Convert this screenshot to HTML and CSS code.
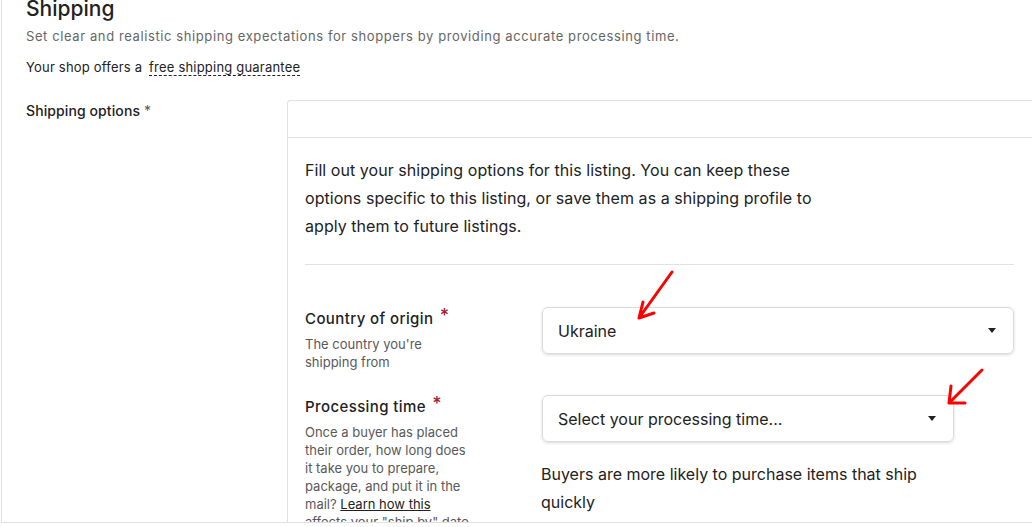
FILE: index.html
```html
<!DOCTYPE html>
<html lang="en">
<head>
    <meta charset="UTF-8">
    <title>Shipping</title>
    <meta name="viewport" content="width=device-width, initial-scale=1.0">
    <link rel="stylesheet" href="styles.css">
</head>
<body>
    <div class="page">
        <!-- Section heading -->
        <div class="section-head">
            <h1>Shipping</h1>
            <p class="sub">Set clear and realistic shipping expectations for shoppers by providing accurate processing time.</p>
            <p class="guarantee">Your shop offers a <span class="dashed">free shipping guarantee</span></p>
        </div>

        <div class="row">
            <div class="row-label">Shipping options <span class="req-small">*</span></div>

            <div class="panel">
                <div class="panel-top"></div>
                <div class="panel-body">
                    <p class="intro">Fill out your shipping options for this listing. You can keep these options specific to this listing, or save them as a shipping profile to apply them to future listings.</p>
                    <hr class="divider">

                    <div class="field">
                        <div class="field-label">
                            <div class="field-title">Country of origin <span class="req">*</span></div>
                            <div class="field-desc">The country you're shipping from</div>
                        </div>
                        <div class="field-control">
                            <div class="select">
                                <span>Ukraine</span>
                                <span class="caret"></span>
                            </div>
                        </div>
                    </div>

                    <div class="field">
                        <div class="field-label">
                            <div class="field-title">Processing time <span class="req">*</span></div>
                            <div class="field-desc">Once a buyer has placed their order, how long does it take you to prepare, package, and put it in the mail? <a href="#">Learn how this</a> affects your "ship by" date</div>
                        </div>
                        <div class="field-control narrow">
                            <div class="select">
                                <span>Select your processing time...</span>
                                <span class="caret"></span>
                            </div>
                            <p class="note">Buyers are more likely to purchase items that ship quickly</p>
                        </div>
                    </div>
                </div>
            </div>
        </div>

        <!-- hand-drawn annotation arrows -->
        <svg class="marks" width="1032" height="527" viewBox="0 0 1032 527">
            <g fill="none" stroke="#ff0000" stroke-width="3" stroke-linecap="round" stroke-linejoin="round">
                <path d="M672 272 L639 318 M643 302 L639 318 L654 313"/>
                <path d="M982 370 L949 403 M951 386 L949 403 L965 403"/>
            </g>
        </svg>
    </div>
</body>
</html>
```

FILE: styles.css
```css
body {
    margin: 0;
    font-family: Inter, 'Noto Sans', Arial, sans-serif;
    color: #222222;
    background: #fff;
    overflow: hidden;
}
.page {
    position: relative;
    margin-left: 1px;
    height: 522px;
    border-left: 1px solid #e1e1e1;
    border-bottom: 1px solid #e1e1e1;
    overflow: hidden;
}
.section-head {
    padding-left: 24px;
    margin-top: -4px;
}
h1 {
    margin: 0;
    font-size: 21px;
    font-weight: 500;
    line-height: 26px;
}
.sub {
    margin: 5px 0 0 0;
    font-size: 13px;
    line-height: 18px;
    letter-spacing: 0.6px;
    color: #666666;
}
.guarantee {
    margin: 13px 0 0 0;
    font-size: 13px;
    line-height: 18px;
    letter-spacing: 0.2px;
}
.dashed {
    margin-left: 3px;
    border-bottom: 1px dashed #222;
}
.row {
    display: flex;
    margin-top: 24px;
}
.row-label {
    width: 261px;
    flex-shrink: 0;
    padding: 2px 0 0 24px;
    font-size: 14px;
    font-weight: 500;
    line-height: 18px;
    letter-spacing: 0.1px;
}
.req-small {
    color: #595959;
    font-weight: 400;
}
.panel {
    flex: 1;
    border: 1px solid #e1e1e1;
    border-right: none;
    border-radius: 4px 0 0 0;
}
.panel-top {
    height: 36px;
    border-bottom: 1px solid #e1e1e1;
}
.panel-body {
    padding: 18px 18px 0 17px;
}
.intro {
    margin: 0;
    max-width: 520px;
    font-size: 16px;
    line-height: 28px;
    letter-spacing: 0.05px;
}
.divider {
    border: none;
    border-top: 1px solid #e1e1e1;
    margin: 24px 0 42px 0;
}
.field {
    display: flex;
    margin-bottom: 24px;
}
.field-label {
    width: 237px;
    flex-shrink: 0;
}
.field-title {
    font-size: 15px;
    font-weight: 500;
    line-height: 24px;
    letter-spacing: 0.4px;
}
.req {
    margin-left: 2px;
    color: #a61a2e;
    font-size: 18px;
    vertical-align: top;
    line-height: 18px;
}
.field-desc {
    margin-top: 4px;
    max-width: 168px;
    font-size: 13px;
    line-height: 18px;
    color: #595959;
}
.field-desc a {
    color: #222;
}
.field-control {
    flex: 1;
}
.field-control.narrow {
    flex: none;
    width: 412px;
}
.select {
    display: flex;
    align-items: center;
    justify-content: space-between;
    height: 45px;
    padding: 0 17px 0 15px;
    border: 1px solid #dcdcdc;
    border-radius: 6px;
    box-shadow: 0 1px 3px rgba(0, 0, 0, 0.15);
    font-size: 16px;
}
.caret {
    width: 0;
    height: 0;
    border-left: 4.5px solid transparent;
    border-right: 4.5px solid transparent;
    border-top: 5px solid #222;
}
.note {
    margin: 18px 0 0 -1px;
    font-size: 16px;
    line-height: 28px;
}
.marks {
    position: absolute;
    left: -2px;
    top: 0;
    pointer-events: none;
}
```
